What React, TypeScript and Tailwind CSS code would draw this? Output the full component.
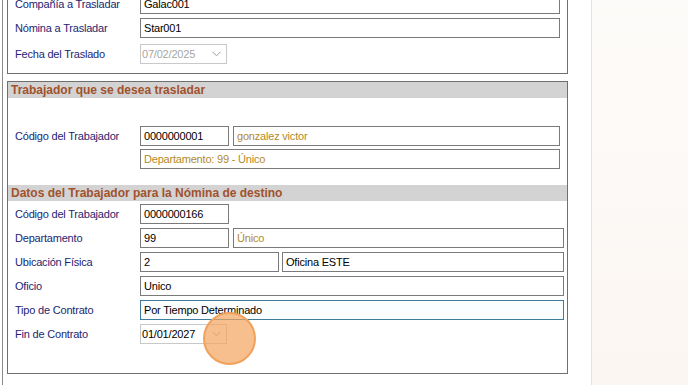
import React from 'react'

type Field = { value: string; w: string; tone?: 'normal' | 'gold' | 'focus' }

function TextBox({ value, w, tone = 'normal' }: Field) {
  const toneClass =
    tone === 'gold'
      ? 'text-[#b3892a] border-[#7a7a7a] bg-white'
      : tone === 'focus'
        ? 'text-black border-[#3f7d9c] bg-[#fbfeff]'
        : 'text-black border-[#7a7a7a] bg-white'
  return (
    <div className={`${w} h-[20px] shrink-0 border ${toneClass} pl-[3px] flex items-center whitespace-nowrap overflow-hidden`}>
      {value}
    </div>
  )
}

function DateBox({ value, disabled }: { value: string; disabled?: boolean }) {
  return (
    <div className="w-[87px] h-[20px] shrink-0 border border-[#c9c9c9] bg-white flex items-center pl-[1px] pr-[5px]">
      <span className={disabled ? 'text-[#a6a6a6]' : 'text-black'}>{value}</span>
      <svg className="ml-auto" width="9" height="6" viewBox="0 0 9 6" fill="none">
        <path d="M0.5 0.8 L4.5 4.8 L8.5 0.8" stroke="#9a9a9a" strokeWidth="1" />
      </svg>
    </div>
  )
}

function Row({ label, children, gap = 'gap-[4px]' }: { label: string; children?: React.ReactNode; gap?: string }) {
  return (
    <div className="h-[20px] flex items-center">
      <div className="w-[125px] shrink-0 text-[#1d2572] whitespace-nowrap">{label}</div>
      <div className={`flex items-center ${gap}`}>{children}</div>
    </div>
  )
}

function SectionHeader({ title }: { title: string }) {
  return (
    <div className="h-[16px] bg-[#d3d3d3] pl-[3px] font-bold text-[12px] tracking-normal text-[#a0522d] leading-[16px] whitespace-nowrap">
      {title}
    </div>
  )
}

export default function App() {
  return (
    <div className="relative w-[688px] h-[385px] overflow-hidden flex bg-white text-[11px] tracking-[-0.2px] font-['Liberation_Sans',Arial,sans-serif]">
      {/* form area */}
      <div className="w-[592px] shrink-0 border-r border-[#e3e3e3] flex">
        <div className="w-[2px] shrink-0" />
        <div className="flex-1 border-l border-[#8a8a8a] pl-[4px]">
          {/* traslado panel (scrolled, top cut off) */}
          <div className="w-[561px] mt-[-15px] border border-[#6f6f6f] pt-[8px] pb-[9px] pl-[7px] flex flex-col gap-[4px]">
            <Row label="Compañía a Trasladar">
              <TextBox value="Galac001" w="w-[420px]" />
            </Row>
            <Row label="Nómina a Trasladar">
              <TextBox value="Star001" w="w-[420px]" />
            </Row>
            <div className="mt-[2px]">
              <Row label="Fecha del Traslado">
                <DateBox value="07/02/2025" disabled />
              </Row>
            </div>
          </div>

          {/* trabajador panel */}
          <div className="w-[561px] mt-[7px] border border-[#6f6f6f] pb-[29px]">
            <SectionHeader title="Trabajador que se desea trasladar" />
            <div className="pl-[7px] mt-[28px] flex flex-col gap-[3px]">
              <Row label="Código del Trabajador">
                <TextBox value="0000000001" w="w-[89px]" />
                <TextBox value="gonzalez victor" w="w-[327px]" tone="gold" />
              </Row>
              <Row label="">
                <TextBox value="Departamento: 99 - Único" w="w-[420px]" tone="gold" />
              </Row>
            </div>

            <div className="mt-[16px]">
              <SectionHeader title="Datos del Trabajador para la Nómina de destino" />
            </div>
            <div className="pl-[7px] mt-[3px] flex flex-col gap-[4px]">
              <Row label="Código del Trabajador">
                <TextBox value="0000000166" w="w-[89px]" />
              </Row>
              <Row label="Departamento">
                <TextBox value="99" w="w-[89px]" />
                <TextBox value="Único" w="w-[331px]" tone="gold" />
              </Row>
              <Row label="Ubicación Física" gap="gap-[3px]">
                <TextBox value="2" w="w-[139px]" />
                <TextBox value="Oficina ESTE" w="w-[282px]" />
              </Row>
              <Row label="Oficio">
                <TextBox value="Unico" w="w-[424px]" />
              </Row>
              <Row label="Tipo de Contrato">
                <TextBox value="Por Tiempo Determinado" w="w-[424px]" tone="focus" />
              </Row>
              <Row label="Fin de Contrato">
                <DateBox value="01/01/2027" />
              </Row>
            </div>
          </div>
        </div>
      </div>

      {/* neighbouring pane */}
      <div className="flex-1 bg-gradient-to-b from-[#fdfbf9] to-[#fbf6f2]" />

      {/* click highlight */}
      <div className="absolute left-[203px] top-[312px] w-[53px] h-[53px] rounded-full border-2 border-[#f0a15c] bg-[#f4a45e]/70" />
    </div>
  )
}
